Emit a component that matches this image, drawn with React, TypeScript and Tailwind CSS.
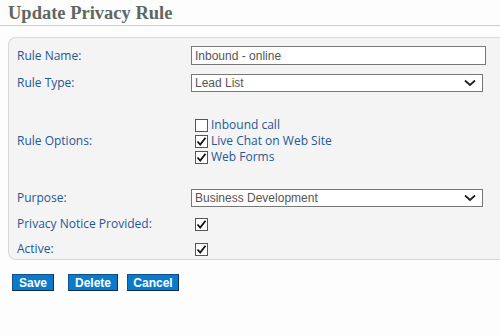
function Check({ checked }: { checked: boolean }) {
  return (
    <span className="inline-flex items-center justify-center w-[13px] h-[13px] border border-[#555] bg-white shrink-0">
      {checked ? (
        <svg width="11" height="11" viewBox="0 0 11 11">
          <path d="M1.5 5.5 L4.2 8.5 L9.5 1.8" fill="none" stroke="#111" strokeWidth="1.8" />
        </svg>
      ) : null}
    </span>
  );
}

function Chevron() {
  return (
    <svg width="12" height="8" viewBox="0 0 12 8" className="mr-[6px]">
      <path d="M1 1.5 L6 6 L11 1.5" fill="none" stroke="#222" strokeWidth="1.8" />
    </svg>
  );
}

const label = "w-[174px] text-[12px] font-medium text-[#1d5898]";

export default function App() {
  return (
    <div className="w-[500px] h-[336px] bg-[#fdfdfd] font-['Open_Sans',sans-serif] overflow-hidden">
      <div className="pl-2 pt-[3px] h-[26px] border-b border-[#cfcfcf]">
        <h1 className="font-['Liberation_Serif',serif] font-bold text-[18.5px] leading-[20px] text-[#5d6861]">
          Update Privacy Rule
        </h1>
      </div>
      <div className="ml-2 mt-[11px] h-[223px] bg-[#f4f4f4] border border-r-0 border-[#d8d8d8] rounded-l-[8px] pl-2 pt-[8px]">
        <div className="flex items-center h-[19px]">
          <span className={label}>Rule Name:</span>
          <div className="w-[295px] h-[19px] bg-white border border-[#777] flex items-center px-[3px] text-[12px] text-[#555] font-['Liberation_Sans',sans-serif]">
            Inbound - online
          </div>
        </div>
        <div className="flex items-center h-[18px] mt-[9px]">
          <span className={label}>Rule Type:</span>
          <div className="w-[292px] h-[18px] bg-white border border-[#777] flex items-center justify-between pl-[3px] text-[12px] text-[#555] font-['Liberation_Sans',sans-serif]">
            Lead List
            <Chevron />
          </div>
        </div>
        <div className="flex items-center mt-[25px]">
          <span className={label}>Rule Options:</span>
          <div className="flex flex-col pl-1 text-[12px] font-medium text-[#1d5898] leading-[16px]">
            <div className="flex items-center gap-[3px]">
              <Check checked={false} />
              Inbound call
            </div>
            <div className="flex items-center gap-[3px]">
              <Check checked />
              Live Chat on Web Site
            </div>
            <div className="flex items-center gap-[3px]">
              <Check checked />
              Web Forms
            </div>
          </div>
        </div>
        <div className="flex items-center h-[18px] mt-[24px]">
          <span className={label}>Purpose:</span>
          <div className="w-[292px] h-[18px] bg-white border border-[#777] flex items-center justify-between pl-[3px] text-[12px] text-[#555] font-['Liberation_Sans',sans-serif]">
            Business Development
            <Chevron />
          </div>
        </div>
        <div className="flex items-center h-[16px] mt-[9px]">
          <span className={label}>Privacy Notice Provided:</span>
          <span className="pl-1">
            <Check checked />
          </span>
        </div>
        <div className="flex items-center h-[16px] mt-[9px]">
          <span className={label}>Active:</span>
          <span className="pl-1">
            <Check checked />
          </span>
        </div>
      </div>
      <div className="flex pl-3 mt-[14px] font-['Liberation_Sans',sans-serif] font-bold text-[12px] text-white">
        <button className="w-[42px] h-[17px] bg-[#0a7acb] border border-[#14508a] border-r-[#0b2d55] border-b-[#0b2d55] leading-none">
          Save
        </button>
        <button className="ml-[14px] w-[50px] h-[17px] bg-[#0a7acb] border border-[#14508a] border-r-[#0b2d55] border-b-[#0b2d55] leading-none">
          Delete
        </button>
        <button className="ml-[9px] w-[52px] h-[17px] bg-[#0a7acb] border border-[#14508a] border-r-[#0b2d55] border-b-[#0b2d55] leading-none">
          Cancel
        </button>
      </div>
    </div>
  );
}
